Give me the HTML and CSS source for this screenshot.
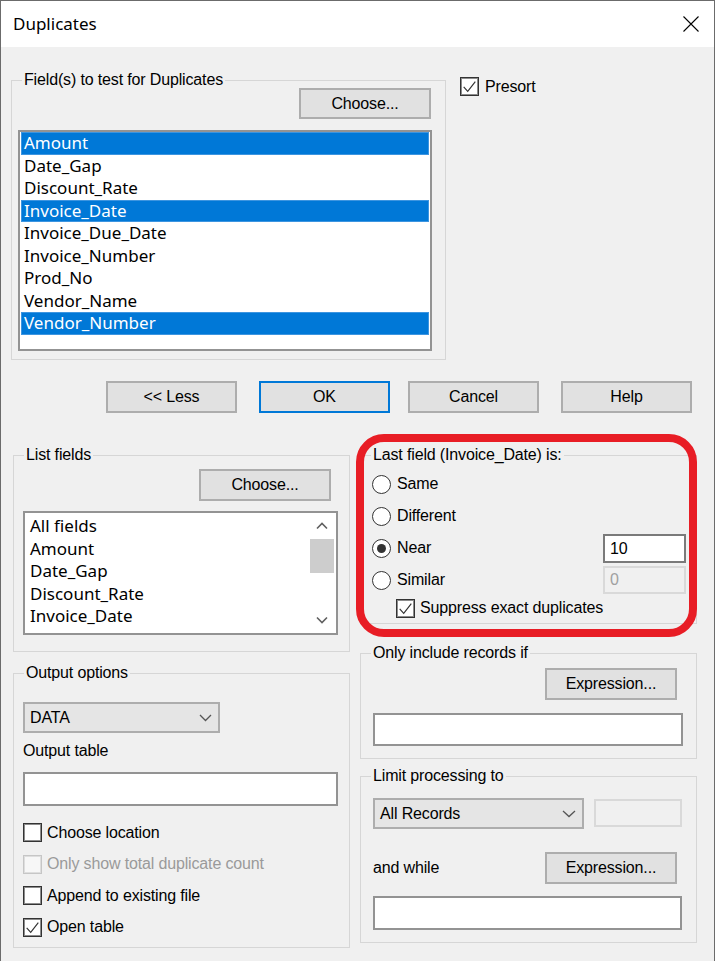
FILE: index.html
```html
<!DOCTYPE html>
<html>
<head>
<meta charset="utf-8">
<title>Duplicates</title>
<link rel="stylesheet" href="styles.css">
</head>
<body>
<div class="dialog">
  <div class="titlebar">
    <span class="title">Duplicates</span>
    <svg class="close" width="16" height="16" viewBox="0 0 16 16"><path d="M0.5 0.5 L15.5 15.5 M15.5 0.5 L0.5 15.5" stroke="#000" stroke-width="1.1" fill="none"/></svg>
  </div>
  <div class="content">
    <div class="top">
      <fieldset class="group g-fields">
        <legend>Field(s) to test for Duplicates</legend>
        <div class="btn-row br-fields"><button class="btn btn-choose">Choose...</button></div>
        <div class="listbox lb-fields">
          <div class="item sel">Amount</div>
          <div class="item">Date_Gap</div>
          <div class="item">Discount_Rate</div>
          <div class="item sel">Invoice_Date</div>
          <div class="item">Invoice_Due_Date</div>
          <div class="item">Invoice_Number</div>
          <div class="item">Prod_No</div>
          <div class="item">Vendor_Name</div>
          <div class="item sel">Vendor_Number</div>
        </div>
      </fieldset>
      <div class="check presort">
        <span class="cb"><svg viewBox="0 0 19 19"><path d="M3 10 L7.5 15 L16 4" fill="none" stroke="#333" stroke-width="1.3"/></svg></span>
        <span>Presort</span>
      </div>
    </div>

    <div class="actions">
      <button class="btn act less">&lt;&lt; Less</button>
      <button class="btn act ok">OK</button>
      <button class="btn act cancel">Cancel</button>
      <button class="btn act help">Help</button>
    </div>

    <div class="bottom">
      <div class="col">
        <fieldset class="group g-list">
          <legend>List fields</legend>
          <div class="btn-row br-list"><button class="btn btn-choose2">Choose...</button></div>
          <div class="listbox lb-list">
            <div class="lb-items">
              <div class="item2">All fields</div>
              <div class="item2">Amount</div>
              <div class="item2">Date_Gap</div>
              <div class="item2">Discount_Rate</div>
              <div class="item2">Invoice_Date</div>
              <div class="item2">Invoice_Due_Date</div>
            </div>
            <div class="scrollbar">
              <div class="sb-arrow"><svg width="12" height="8" viewBox="0 0 12 8"><path d="M1 6.5 L6 1.5 L11 6.5" fill="none" stroke="#606060" stroke-width="1.6"/></svg></div>
              <div class="sb-thumb"></div>
              <div class="sb-track"></div>
              <div class="sb-arrow"><svg width="12" height="8" viewBox="0 0 12 8"><path d="M1 1.5 L6 6.5 L11 1.5" fill="none" stroke="#606060" stroke-width="1.6"/></svg></div>
            </div>
          </div>
        </fieldset>

        <fieldset class="group g-output">
          <legend>Output options</legend>
          <div class="select sel-data">
            <span>DATA</span>
            <svg width="13" height="8" viewBox="0 0 13 8"><path d="M1 1 L6.5 6.5 L12 1" fill="none" stroke="#555" stroke-width="1.3"/></svg>
          </div>
          <div class="label out-label">Output table</div>
          <div class="textbox tb-out"></div>
          <div class="checks">
            <div class="check crow">
              <span class="cb"></span><span>Choose location</span>
            </div>
            <div class="check crow disabled">
              <span class="cb"></span><span>Only show total duplicate count</span>
            </div>
            <div class="check crow">
              <span class="cb"></span><span>Append to existing file</span>
            </div>
            <div class="check crow">
              <span class="cb"><svg viewBox="0 0 19 19"><path d="M3 10 L7.5 15 L16 4" fill="none" stroke="#333" stroke-width="1.3"/></svg></span><span>Open table</span>
            </div>
          </div>
        </fieldset>
      </div>

      <div class="col">
        <div class="annot-wrap">
          <fieldset class="group g-last">
            <legend>Last field (Invoice_Date) is:</legend>
            <div class="radios">
              <div class="rrow"><span class="radio"></span><span>Same</span></div>
              <div class="rrow"><span class="radio"></span><span>Different</span></div>
              <div class="rrow"><span class="radio on"></span><span>Near</span><div class="textbox num">10</div></div>
              <div class="rrow"><span class="radio"></span><span>Similar</span><div class="textbox num num-dis">0</div></div>
            </div>
            <div class="check suppress">
              <span class="cb"><svg viewBox="0 0 19 19"><path d="M3 10 L7.5 15 L16 4" fill="none" stroke="#333" stroke-width="1.3"/></svg></span>
              <span>Suppress exact duplicates</span>
            </div>
          </fieldset>
          <div class="annotation"></div>
        </div>

        <fieldset class="group g-only">
          <legend>Only include records if</legend>
          <div class="btn-row br-expr"><button class="btn btn-expr">Expression...</button></div>
          <div class="textbox tb-only"></div>
        </fieldset>

        <fieldset class="group g-limit">
          <legend>Limit processing to</legend>
          <div class="limit-row">
            <div class="select sel-all">
              <span>All Records</span>
              <svg width="14" height="8" viewBox="0 0 14 8"><path d="M1 1 L7 6.5 L13 1" fill="none" stroke="#555" stroke-width="1.3"/></svg>
            </div>
            <div class="textbox small-dis"></div>
          </div>
          <div class="while-row">
            <span class="label">and while</span>
            <button class="btn btn-expr">Expression...</button>
          </div>
          <div class="textbox tb-while"></div>
        </fieldset>
      </div>
    </div>
  </div>
</div>
</body>
</html>
```

FILE: styles.css
```css
* { box-sizing: border-box; }

html, body {
  margin: 0;
  padding: 0;
  background: #ffffff;
}

body {
  font-family: "Liberation Sans", Arial, sans-serif;
  font-size: 16px;
  letter-spacing: -0.15px;
  color: #000;
}

.dialog {
  width: 715px;
  height: 961px;
  border: 1px solid #6b6b6b;
  border-bottom: none;
  background: #f0f0f0;
  overflow: hidden;
}

/* title bar */
.titlebar {
  height: 46px;
  background: #fff;
  display: flex;
  align-items: center;
  justify-content: space-between;
  padding: 0 15px 0 12px;
}

.title {
  font-family: "Noto Sans", "Open Sans", sans-serif;
  font-size: 17px;
  letter-spacing: 0;
  line-height: 46px;
  margin-top: -1px;
}

.close { display: block; }

/* generic group box */
fieldset.group {
  margin: 0;
  padding: 0;
  border: 1px solid #d6d6d6;
  min-width: 0;
}

fieldset.group > legend {
  margin-left: 10px;
  padding: 0 2px;
  line-height: 16px;
  font-size: 16px;
}

/* buttons */
.btn {
  font-family: "Liberation Sans", Arial, sans-serif;
  font-size: 16px;
  letter-spacing: -0.15px;
  color: #000;
  background: #e1e1e1;
  border: 2px solid #adadad;
  padding: 0;
  margin: 0;
  display: flex;
  align-items: center;
  justify-content: center;
}

.btn-row {
  display: flex;
  justify-content: flex-end;
}

/* listboxes */
.listbox {
  background: #fff;
  border: 2px solid #939393;
  overflow: hidden;
}

.item {
  font-family: "Noto Sans", "Open Sans", sans-serif;
  font-size: 17px;
  letter-spacing: 0;
  height: 22.5px;
  line-height: 22.5px;
  padding-left: 3px;
  white-space: nowrap;
}

.item.sel {
  background: #0078d7;
  color: #fff;
  box-shadow: inset 0 0 0 1px #3d95e0;
}

/* checkboxes and radios */
.check {
  display: flex;
  align-items: center;
}

.cb {
  width: 19px;
  height: 19px;
  flex: none;
  background: #fff;
  border: 1px solid #333;
  box-shadow: inset 0 0 0 1px #8c8c8c;
  display: block;
}

.cb svg {
  display: block;
  width: 17px;
  height: 17px;
}

.check.disabled { color: #9a9a9a; }

.check.disabled .cb {
  border-color: #c6c6c6;
  box-shadow: inset 0 0 0 1px #dedede;
  background: #f7f7f7;
}

.radio {
  width: 19px;
  height: 19px;
  flex: none;
  border-radius: 50%;
  background: #fff;
  border: 1.5px solid #333;
  display: flex;
  align-items: center;
  justify-content: center;
}

.radio.on::after {
  content: "";
  width: 9px;
  height: 9px;
  border-radius: 50%;
  background: #333;
}

/* text boxes and selects */
.textbox {
  background: #fff;
  border: 2px solid #939393;
}

.select {
  background: #e5e5e5;
  border: 2px solid #adadad;
  display: flex;
  align-items: center;
  justify-content: space-between;
  padding: 0 6px 0 5px;
}

.label {
  line-height: 18px;
}

/* ---------- top section ---------- */
.top {
  display: flex;
  align-items: flex-start;
}

.g-fields {
  margin-left: 10px !important;
  margin-top: 25px !important;
  width: 435px;
}

.br-fields { padding-right: 14px; }

.btn-choose {
  width: 132px;
  height: 31px;
}

.lb-fields {
  margin: 11px 13px 8px 6px;
  height: 221px;
  padding: 0 1px;
}

.presort {
  margin-left: 14px;
  margin-top: 30px;
  gap: 6px;
}

/* ---------- action buttons ---------- */
.actions {
  display: flex;
  padding-left: 105px;
  margin-top: 21px;
}

.act {
  width: 131px;
  height: 32px;
}

.ok {
  margin-left: 22px;
  border-color: #0078d7;
}

.cancel { margin-left: 18px; }
.help { margin-left: 22px; }

/* ---------- bottom section ---------- */
.bottom {
  display: flex;
  gap: 10px;
  padding-left: 12px;
  margin-top: 34px;
}

.col {
  width: 337px;
  display: flex;
  flex-direction: column;
}

/* list fields */
.br-list {
  padding-right: 18px;
  margin-top: 6px;
}

.btn-choose2 {
  width: 132px;
  height: 32px;
}

.lb-list {
  margin: 10px 11px 16px 9px;
  height: 124px;
  display: flex;
}

.lb-items {
  flex: 1;
  padding-top: 2px;
  padding-left: 5px;
  overflow: hidden;
}

.item2 {
  font-family: "Noto Sans", "Open Sans", sans-serif;
  font-size: 17px;
  letter-spacing: 0;
  height: 22.5px;
  line-height: 22.5px;
  white-space: nowrap;
}

.scrollbar {
  width: 24px;
  margin-right: 2px;
  display: flex;
  flex-direction: column;
  background: #fff;
}

.sb-arrow {
  height: 26px;
  display: flex;
  align-items: center;
  justify-content: center;
}

.sb-thumb {
  height: 34px;
  background: #cdcdcd;
}

.sb-track { flex: 1; }

/* output options */
.g-output { margin-top: 13px !important; }

.sel-data {
  margin: 21px 0 0 9px;
  width: 197px;
  height: 31px;
}

.out-label {
  margin-top: 9px;
  padding-left: 9px;
}

.tb-out {
  margin: 12px 11px 0 9px;
  height: 34px;
}

.checks {
  margin-top: 11px;
  padding: 0 0 4px 9px;
}

.crow {
  height: 31.5px;
  gap: 5px;
}

/* last field */
.annot-wrap {
  position: relative;
}

.radios { margin-top: 5px; }

.rrow {
  height: 32px;
  display: flex;
  align-items: center;
  padding: 0 10px 0 11px;
  gap: 6px;
}

.num {
  margin-left: auto;
  width: 83px;
  height: 29px;
  border-color: #7a7a7a;
  padding-left: 5px;
  line-height: 25px;
}

.num-dis {
  height: 28px;
  line-height: 24px;
  background: #f0f0f0;
  border-color: #d9d9d9;
  color: #a0a0a0;
}

.suppress {
  height: 24px;
  padding-left: 35px;
  gap: 5px;
  margin-bottom: 3px;
}

.annotation {
  position: absolute;
  left: -4px;
  top: -13px;
  width: 341px;
  height: 203px;
  border: 8px solid #e81d25;
  border-radius: 28px;
  pointer-events: none;
}

/* only include */
.g-only { margin-top: 21px !important; }

.br-expr {
  margin-top: 7px;
  padding-right: 19px;
}

.btn-expr {
  width: 132px;
  height: 32px;
}

.tb-only {
  margin: 13px 13px 12px 12px;
  height: 33px;
}

/* limit processing */
.g-limit { margin-top: 9px !important; }

.limit-row {
  display: flex;
  align-items: flex-start;
  margin-top: 14px;
  padding-left: 12px;
}

.sel-all {
  width: 211px;
  height: 31px;
  padding-right: 6px;
}

.small-dis {
  width: 88px;
  height: 28px;
  margin: 1px 0 0 10px;
  background: #f0f0f0;
  border-color: #d9d9d9;
}

.while-row {
  display: flex;
  align-items: center;
  justify-content: space-between;
  margin-top: 23px;
  padding: 0 19px 0 12px;
}

.tb-while {
  margin: 12px 14px 12px 12px;
  height: 34px;
}
```
